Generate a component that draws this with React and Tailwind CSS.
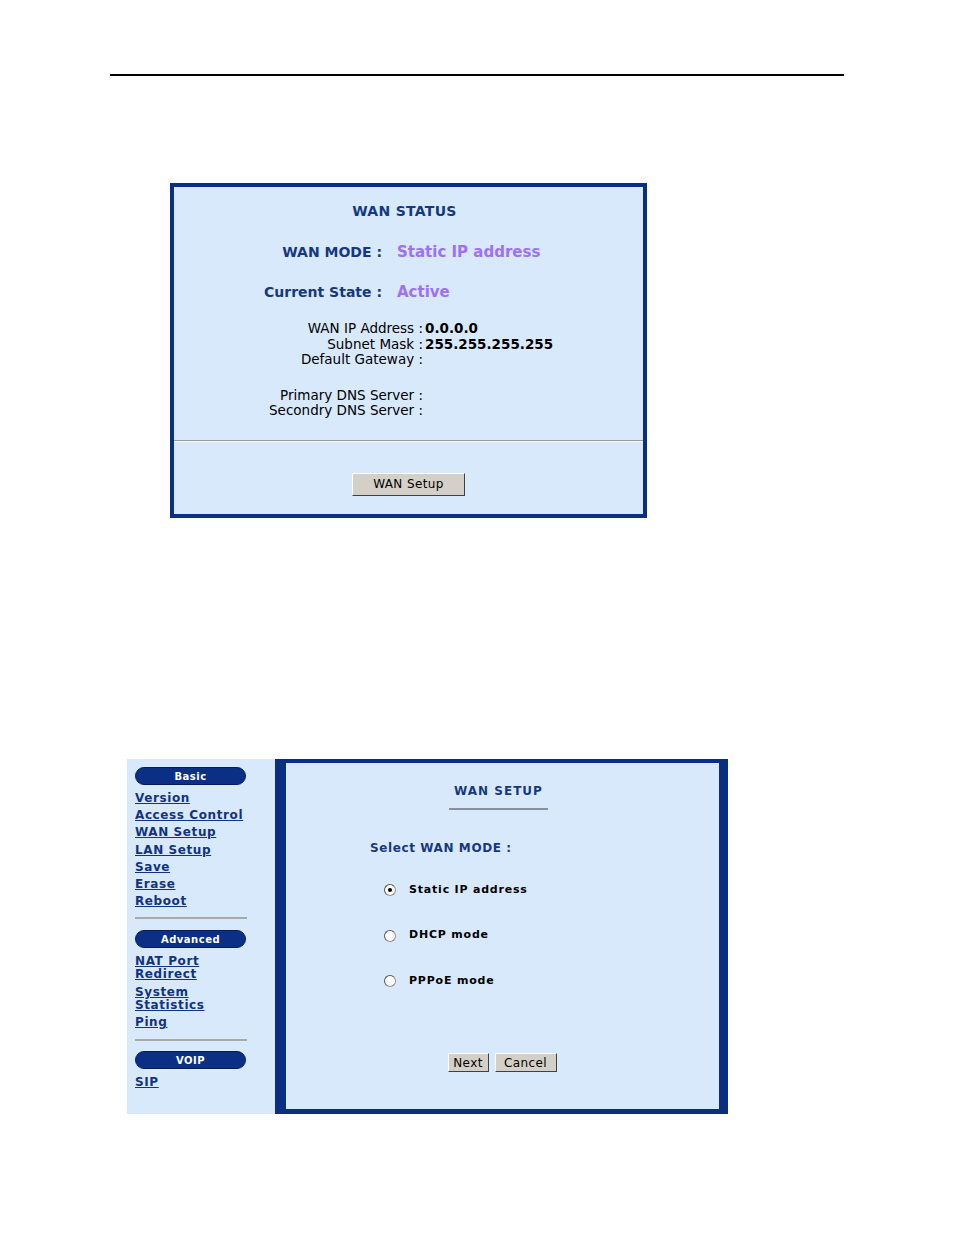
import React from 'react'

const FONT = { fontFamily: '"DejaVu Sans", Verdana, sans-serif' }

function InfoRow({ label, value }) {
  return (
    <div className="flex">
      <div className="w-[249px] text-right">{label} :</div>
      <div className="pl-[2px] font-bold">{value}</div>
    </div>
  )
}

function Pill({ children }) {
  return (
    <div className="w-[111px] h-[18px] rounded-full bg-[#0c2f86] border border-[#061d5c] text-white text-[10px] font-bold flex items-center justify-center tracking-[0.5px]">
      {children}
    </div>
  )
}

function SideLink({ children, className = '' }) {
  return (
    <a className={`block text-[#12337e] font-bold underline text-[12px] tracking-[0.6px] leading-[13px] ${className}`}>
      {children}
    </a>
  )
}

function Radio({ checked, label }) {
  return (
    <div className="flex items-center h-[16px]">
      <span className="w-[12px] h-[12px] rounded-full bg-white border border-[#8f8f8f] border-t-[#555] border-l-[#555] flex items-center justify-center">
        {checked && <span className="w-[4px] h-[4px] rounded-full bg-black" />}
      </span>
      <span className="ml-[13px] text-[11px] font-bold text-black tracking-[0.8px]">{label}</span>
    </div>
  )
}

function WinButton({ children, className }) {
  return (
    <button
      type="button"
      className={`bg-[#d4d0c8] border border-t-white border-l-white border-r-[#404040] border-b-[#404040] text-black text-[12px] tracking-[0.4px] flex items-center justify-center ${className}`}
    >
      {children}
    </button>
  )
}

export default function App() {
  return (
    <div className="bg-white w-[954px] h-[1235px] relative" style={FONT}>
      <div className="pt-[74px] px-[110px]">
        <div className="h-[2px] w-[734px] bg-black" />
      </div>

      {/* WAN status panel */}
      <div className="mt-[107px] ml-[170px] w-[477px] h-[335px] border-[4px] border-[#0a2f80] bg-[#d9e9fc] flex flex-col">
        <div className="pt-[15px] text-center text-[14px] leading-[18px] font-bold text-[#15397f] tracking-[0.3px] pr-[8px]">
          WAN STATUS
        </div>
        <div className="mt-[22px] flex leading-[20px] font-bold items-baseline">
          <div className="w-[208px] text-right text-[#15397f] text-[14px]">WAN MODE :</div>
          <div className="pl-[15px] text-[#a070f3] text-[15px]">Static IP address</div>
        </div>
        <div className="mt-[20px] flex leading-[20px] font-bold items-baseline">
          <div className="w-[208px] text-right text-[#15397f] text-[14px]">Current State :</div>
          <div className="pl-[15px] text-[#a070f3] text-[15px]">Active</div>
        </div>
        <div className="mt-[19px] text-[13.5px] leading-[15.5px] text-black">
          <InfoRow label="WAN IP Address" value="0.0.0.0" />
          <InfoRow label="Subnet Mask" value="255.255.255.255" />
          <InfoRow label="Default Gateway" value="" />
        </div>
        <div className="mt-[20px] text-[13.5px] leading-[15.5px] text-black">
          <InfoRow label="Primary DNS Server" value="" />
          <InfoRow label="Secondry DNS Server" value="" />
        </div>
        <div className="mt-[21px] h-[2px] border-t border-[#9a9a9a] border-b border-b-[#f4f8fe]" />
        <div className="mt-[31px] flex justify-center">
          <WinButton className="w-[113px] h-[23px] text-[12.5px]">WAN Setup</WinButton>
        </div>
      </div>

      {/* WAN setup screen */}
      <div className="mt-[241px] ml-[127px] w-[601px] h-[355px] flex">
        <div className="w-[148px] bg-[#d9e9fc] pl-[8px] pt-[8px]">
          <Pill>Basic</Pill>
          <div className="mt-[7px] flex flex-col gap-[4.2px]">
            <SideLink>Version</SideLink>
            <SideLink>Access Control</SideLink>
            <SideLink>WAN Setup</SideLink>
            <SideLink>LAN Setup</SideLink>
            <SideLink>Save</SideLink>
            <SideLink>Erase</SideLink>
            <SideLink>Reboot</SideLink>
          </div>
          <div className="mt-[9px] w-[112px] h-[2px] bg-[#a9a9a9]" />
          <div className="mt-[11px]">
            <Pill>Advanced</Pill>
          </div>
          <div className="mt-[7px] flex flex-col">
            <SideLink>NAT Port<br />Redirect</SideLink>
            <SideLink className="mt-[5px]">System<br />Statistics</SideLink>
            <SideLink className="mt-[4px]">Ping</SideLink>
          </div>
          <div className="mt-[10px] w-[112px] h-[2px] bg-[#a9a9a9]" />
          <div className="mt-[10px]">
            <Pill>VOIP</Pill>
          </div>
          <div className="mt-[7px]">
            <SideLink>SIP</SideLink>
          </div>
        </div>

        <div className="flex-1 bg-[#d9e9fc] border-[#0a2f80] border-l-[11px] border-t-[4px] border-r-[9px] border-b-[5px] flex flex-col">
          <div className="pt-[20px] flex flex-col items-center pr-[8px]">
            <div className="text-[12px] leading-[16px] font-bold text-[#15397f] tracking-[1px]">WAN SETUP</div>
            <div className="mt-[9px] w-[99px] h-[2px] bg-[#8a8fa0]" />
          </div>
          <div className="mt-[30px] pl-[84px] text-[12px] leading-[16px] font-bold text-[#15397f] tracking-[0.6px]">
            Select WAN MODE :
          </div>
          <div className="mt-[26px] pl-[98px] flex flex-col gap-[29.5px]">
            <Radio checked label="Static IP address" />
            <Radio label="DHCP mode" />
            <Radio label="PPPoE mode" />
          </div>
          <div className="mt-[64px] flex justify-center gap-[6px] pr-[1px]">
            <WinButton className="w-[41px] h-[19px]">Next</WinButton>
            <WinButton className="w-[62px] h-[19px]">Cancel</WinButton>
          </div>
        </div>
      </div>
    </div>
  )
}
